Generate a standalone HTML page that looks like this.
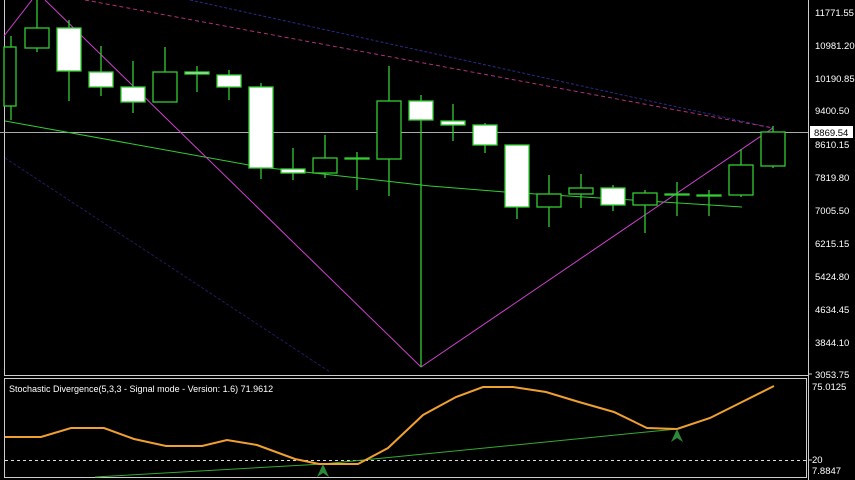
<!DOCTYPE html>
<html><head><meta charset="utf-8"><style>
html,body{margin:0;padding:0;background:#000;width:855px;height:480px;overflow:hidden}
svg{display:block}
text{font-family:"Liberation Sans",sans-serif;font-size:9.5px;fill:#fff}
</style></head><body>
<svg width="855" height="480" viewBox="0 0 855 480" xmlns="http://www.w3.org/2000/svg">
<rect width="855" height="480" fill="#000"/>
<!-- borders -->
<line x1="4.5" y1="0" x2="4.5" y2="375" stroke="#ccc"/>
<line x1="808.5" y1="0" x2="808.5" y2="480" stroke="#ccc"/>
<line x1="4" y1="375.5" x2="808" y2="375.5" stroke="#ccc"/>
<rect x="4.5" y="378.5" width="802" height="99" fill="none" stroke="#ccc"/>
<!-- lines -->
<line x1="0" y1="132.5" x2="808" y2="132.5" stroke="#aaa"/>
<line x1="190" y1="0" x2="773" y2="128" stroke="#2a2a8a" stroke-dasharray="3,2"/>
<line x1="85" y1="0" x2="773" y2="128" stroke="#b0307a" stroke-dasharray="4,3"/>
<line x1="5" y1="158" x2="330" y2="372" stroke="#1e1e66" stroke-dasharray="3,2"/>
<polyline points="5,121 260,167 430,186 505,192 742,207" fill="none" stroke="#3c3"/>
<polyline points="4,36 32,0" fill="none" stroke="#d040d0"/>
<polyline points="45,0 421,367 773,128" fill="none" stroke="#d040d0"/>
<g stroke="#3c3" stroke-width="1.3">
<!-- wicks -->
<line x1="11" y1="36" x2="11" y2="120"/>
<line x1="37" y1="0" x2="37" y2="52"/>
<line x1="69" y1="20" x2="69" y2="101"/>
<line x1="101" y1="46" x2="101" y2="96"/>
<line x1="133" y1="61" x2="133" y2="113"/>
<line x1="165" y1="47" x2="165" y2="102"/>
<line x1="197" y1="66" x2="197" y2="92"/>
<line x1="229" y1="70" x2="229" y2="100"/>
<line x1="261" y1="83" x2="261" y2="179"/>
<line x1="293" y1="148" x2="293" y2="180"/>
<line x1="325" y1="135" x2="325" y2="178"/>
<line x1="357" y1="152" x2="357" y2="190"/>
<line x1="389" y1="66" x2="389" y2="196"/>
<line x1="421" y1="95" x2="421" y2="367"/>
<line x1="453" y1="104" x2="453" y2="141"/>
<line x1="485" y1="123" x2="485" y2="153"/>
<line x1="517" y1="145" x2="517" y2="219"/>
<line x1="549" y1="175" x2="549" y2="227"/>
<line x1="581" y1="174" x2="581" y2="208"/>
<line x1="613" y1="185" x2="613" y2="211"/>
<line x1="645" y1="190" x2="645" y2="233"/>
<line x1="677" y1="182" x2="677" y2="216"/>
<line x1="709" y1="190" x2="709" y2="216"/>
<line x1="741" y1="149" x2="741" y2="197"/>
<line x1="773" y1="126" x2="773" y2="168"/>
</g>
<g stroke="#3c3" stroke-width="1.3">
<rect x="4" y="47" width="12" height="59" fill="#000"/>
<rect x="25" y="28" width="24" height="20" fill="#000"/>
<rect x="57" y="28" width="24" height="43" fill="#fff"/>
<rect x="89" y="72" width="24" height="15" fill="#fff"/>
<rect x="121" y="87" width="24" height="15" fill="#fff"/>
<rect x="153" y="72" width="24" height="30" fill="#000"/>
<rect x="185" y="72" width="24" height="2" fill="#fff"/>
<rect x="217" y="75" width="24" height="12" fill="#fff"/>
<rect x="249" y="87" width="24" height="81" fill="#fff"/>
<rect x="281" y="169" width="24" height="4" fill="#fff"/>
<rect x="313" y="158" width="24" height="15" fill="#000"/>
<rect x="345" y="158" width="24" height="1" fill="#3c3"/>
<rect x="377" y="101" width="24" height="58" fill="#000"/>
<rect x="409" y="101" width="24" height="19" fill="#fff"/>
<rect x="441" y="121" width="24" height="4" fill="#fff"/>
<rect x="473" y="125" width="24" height="20" fill="#fff"/>
<rect x="505" y="145" width="24" height="62" fill="#fff"/>
<rect x="537" y="194" width="24" height="13" fill="#000"/>
<rect x="569" y="188" width="24" height="6" fill="#000"/>
<rect x="601" y="188" width="24" height="17" fill="#fff"/>
<rect x="633" y="193" width="24" height="12" fill="#000"/>
<rect x="665" y="194" width="24" height="1" fill="#3c3"/>
<rect x="697" y="195" width="24" height="1" fill="#3c3"/>
<rect x="729" y="165" width="24" height="30" fill="#000"/>
<rect x="761" y="132" width="24" height="34" fill="#000"/>
</g>
<!-- axis labels -->
<g>
<text x="815" y="16">11771.55</text>
<text x="815" y="49">10981.20</text>
<text x="815" y="82">10190.85</text>
<text x="815" y="114">9400.50</text>
<rect x="810" y="126" width="43" height="12" fill="#fff"/>
<text x="814" y="136" style="fill:#000">8869.54</text>
<text x="815" y="148">8610.15</text>
<text x="815" y="181">7819.80</text>
<text x="815" y="214">7005.50</text>
<text x="815" y="247">6215.15</text>
<text x="815" y="280">5424.80</text>
<text x="815" y="313">4634.45</text>
<text x="815" y="346">3844.10</text>
<text x="815" y="378">3053.75</text>
<text x="812" y="390">75.0125</text>
<text x="812" y="463">20</text>
<text x="812" y="474">7.8847</text>
</g>
<g stroke="#ccc"><line x1="808" y1="374" x2="812" y2="374"/><line x1="808" y1="460" x2="812" y2="460"/></g>
<!-- indicator -->
<text x="9" y="392" style="font-size:9px">Stochastic Divergence(5,3,3 - Signal mode - Version: 1.6) 71.9612</text>
<line x1="5" y1="460.5" x2="806" y2="460.5" stroke="#ddd" stroke-dasharray="3,3"/>
<polyline points="95,477 323,464 677,429" fill="none" stroke="#3a3"/>
<polyline points="5,437 41,437 71,428 104,428 134,439 166,446 202,446 227,440 257,445 295,459 319,464 358,464 388,448 423,415 456,397 483,387 513,387 546,392 579,402 614,412 647,428 677,429 710,418 742,402 774,386" fill="none" stroke="#f0a030" stroke-width="2"/>
<polygon points="323,464 317,477 323,473 329,477" fill="#2a8a3a"/>
<polygon points="677,429 671,442 677,438 683,442" fill="#2a8a3a"/>
</svg>
</body></html>
